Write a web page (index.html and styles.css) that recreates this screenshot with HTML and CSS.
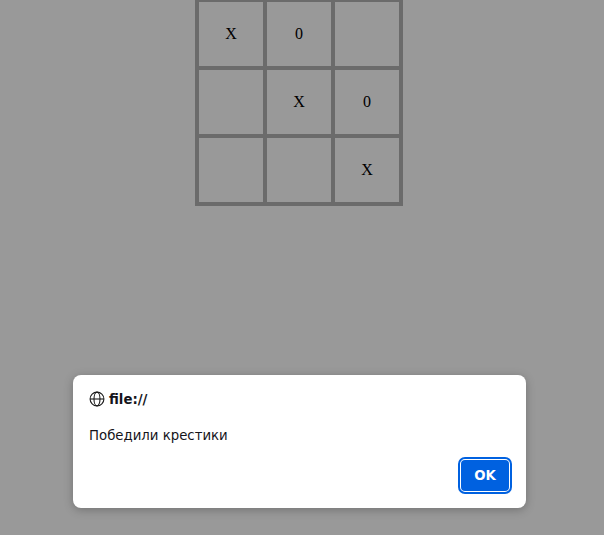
FILE: index.html
```html
<!DOCTYPE html>
<html>
<head>
<meta charset="utf-8">
<link rel="stylesheet" href="styles.css">
</head>
<body>
<div class="board">
  <div class="cell">X</div><div class="cell">0</div><div class="cell"></div>
  <div class="cell"></div><div class="cell">X</div><div class="cell">0</div>
  <div class="cell"></div><div class="cell"></div><div class="cell">X</div>
</div>
<div class="dialog">
  <div class="origin">
    <svg class="globe" width="16" height="16" viewBox="0 0 16 16" fill="none" stroke="#1c1c1c" stroke-width="1.1">
      <circle cx="8" cy="8" r="6.9"/>
      <ellipse cx="8" cy="8" rx="3" ry="6.9"/>
      <line x1="1.1" y1="8" x2="14.9" y2="8"/>
    </svg>
    <span class="host">file://</span>
  </div>
  <div class="message">Победили крестики</div>
  <div class="actions"><button class="ok">OK</button></div>
</div>
</body>
</html>
```
FILE: styles.css
```css
html, body {
  margin: 0;
  padding: 0;
  background: #999999;
  height: 100%;
  overflow: hidden;
}
.board {
  display: grid;
  grid-template-columns: repeat(3, 64px);
  grid-auto-rows: 64px;
  gap: 4px;
  padding: 2px 4px 4px 4px;
  width: max-content;
  margin-left: 195px;
  background: #6b6b6b;
}
.cell {
  background: #999999;
  display: flex;
  align-items: center;
  justify-content: center;
  font-family: "Liberation Serif", serif;
  font-size: 16px;
  color: #000;
}
.dialog {
  position: absolute;
  left: 73px;
  top: 375px;
  width: 453px;
  height: 133px;
  box-sizing: border-box;
  background: #fff;
  border-radius: 8px;
  box-shadow: 0 2px 10px rgba(0,0,0,0.25);
  padding: 16px 17px 17px 16px;
  font-family: "DejaVu Sans", sans-serif;
  font-size: 13.3px;
  color: #15141a;
  display: flex;
  flex-direction: column;
}
.origin {
  display: flex;
  align-items: center;
  gap: 4px;
  height: 16px;
}
.globe { display: block; }
.host { font-weight: bold; }
.message {
  margin-top: 20px;
  line-height: 18px;
}
.actions {
  margin-top: auto;
  display: flex;
  justify-content: flex-end;
}
.ok {
  font-family: "DejaVu Sans", sans-serif;
  font-weight: bold;
  font-size: 13.3px;
  color: #fff;
  background: #0061e0;
  border: none;
  border-radius: 4px;
  width: 48px;
  height: 31px;
  padding: 0;
  outline: 2px solid #0061e0;
  outline-offset: 1px;
}
```
